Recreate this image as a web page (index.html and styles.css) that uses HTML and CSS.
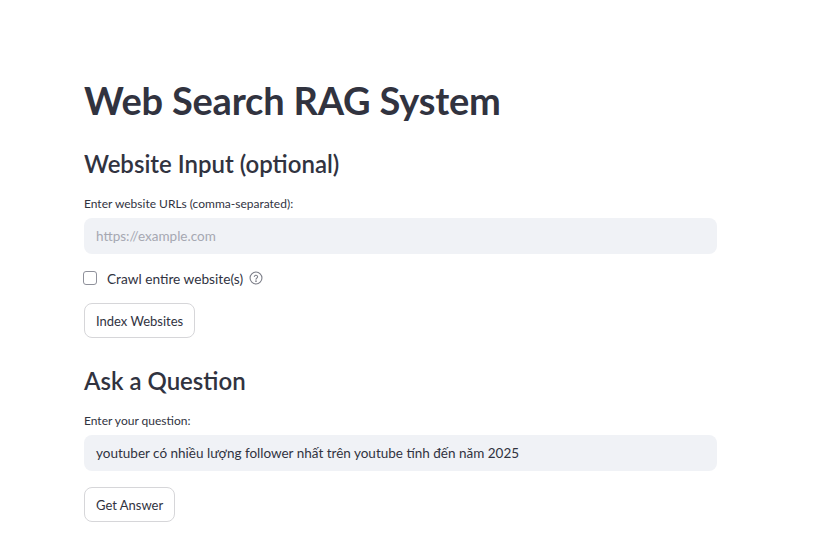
FILE: index.html
```html
<!DOCTYPE html>
<html lang="en">
<head>
<meta charset="utf-8">
<title>Web Search RAG System</title>
<link rel="stylesheet" href="styles.css">
</head>
<body>
<main class="app">
  <h1 class="title">Web Search RAG System</h1>
  <h3 class="subheader">Website Input (optional)</h3>
  <div class="field">
    <label class="label">Enter website URLs (comma-separated):</label>
    <div class="input placeholder">https://example.com</div>
  </div>
  <div class="checkbox-row">
    <span class="checkbox"></span>
    <span class="checkbox-text">Crawl entire website(s)</span>
    <svg class="help" width="14" height="14" viewBox="0 0 16 16" fill="none" stroke="#7d7f89" stroke-width="1.25" stroke-linecap="round">
      <circle cx="8" cy="8" r="6.8"/>
      <path d="M6.1 6.2a1.95 1.95 0 0 1 3.8.5c0 1.3-1.9 1.6-1.9 2.8"/>
      <circle cx="8" cy="11.6" r="0.35" fill="#7d7f89"/>
    </svg>
  </div>
  <button class="btn">Index Websites</button>
  <h3 class="subheader second">Ask a Question</h3>
  <div class="field">
    <label class="label">Enter your question:</label>
    <div class="input value">youtuber có nhiều lượng follower nhất trên youtube tính đến năm 2025</div>
  </div>
  <button class="btn">Get Answer</button>
</main>
</body>
</html>
```
FILE: styles.css
```css
* { box-sizing: border-box; }
html, body { margin: 0; padding: 0; background: #ffffff; }
body {
  font-family: Lato, "Noto Sans", sans-serif;
  color: #31333f;
}
.app {
  width: 633px;
  margin-left: 84px;
  padding-top: 75px;
  display: flex;
  flex-direction: column;
  align-items: flex-start;
}
.title {
  margin: 0;
  font-size: 38px;
  line-height: 50px;
  font-weight: 700;
  letter-spacing: -0.2px;
}
.subheader {
  margin: 23px 0 0 0;
  font-size: 24px;
  line-height: 32px;
  font-weight: 600;
}
.subheader.second { margin-top: 27px; }
.field {
  width: 100%;
  margin-top: 16px;
  display: flex;
  flex-direction: column;
  gap: 6px;
}
.label {
  font-size: 12px;
  line-height: 16px;
}
.input {
  width: 100%;
  height: 36px;
  background: #f0f2f6;
  border-radius: 8px;
  padding: 0 12px;
  display: flex;
  align-items: center;
  font-size: 13.5px;
}
.placeholder { color: #a6a8b2; }
.value { color: #31333f; }
.checkbox-row {
  margin-top: 15px;
  display: flex;
  align-items: center;
  height: 18px;
}
.checkbox {
  width: 14px;
  height: 14px;
  border: 1px solid #8f919b;
  border-radius: 3px;
  margin-left: -1px;
}
.checkbox-text {
  margin-left: 10px;
  font-size: 13.7px;
}
.help { margin-left: 6px; }
.btn {
  margin-top: 16px;
  height: 35px;
  padding: 0 11px;
  background: #ffffff;
  border: 1px solid #d6d6d9;
  border-radius: 8px;
  font-family: inherit;
  font-size: 13px;
  color: #31333f;
}
```
